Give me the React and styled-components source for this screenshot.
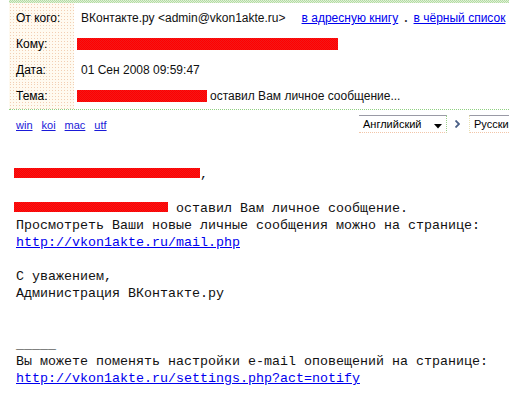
import React from "react";
import styled, { createGlobalStyle } from "styled-components";

const Global = createGlobalStyle`
  html, body { margin: 0; padding: 0; background: #fff; }
  body { width: 509px; height: 408px; overflow: hidden; }
`;

const Page = styled.div`
  width: 509px;
  height: 408px;
  overflow: hidden;
  font-family: "Liberation Sans", Arial, sans-serif;
  color: #111;
`;

const Header = styled.div`
  margin-left: 9px;
  border-bottom: 1px dotted #8fd080;
`;

const TopBand = styled.div`
  height: 3px;
  background: repeating-conic-gradient(#b3dba3 0 25%, #dff1d6 0 50%) 0 0 / 2px 2px;
`;

const Fields = styled.div`
  display: grid;
  grid-template-columns: 65px 1fr;
  grid-template-rows: 28px 26px 26px 26px;
`;

const Label = styled.div`
  display: flex;
  align-items: center;
  padding-left: 7px;
  padding-top: ${(p) => (p.$first ? "2px" : "0")};
  font-size: 12px;
  color: #000;
  background-color: #fffaf0;
  background-image: radial-gradient(circle, #f2cfb4 0.7px, transparent 0.9px);
  background-size: 3px 3px;
`;

const Value = styled.div`
  display: flex;
  align-items: center;
  padding-left: 7px;
  padding-top: ${(p) => (p.$first ? "2px" : "0")};
  font-size: 12px;
  white-space: nowrap;
`;

const HeaderRedact = styled.span`
  display: inline-block;
  width: ${(p) => p.$w}px;
  height: 12px;
  margin-left: -4px;
  margin-right: 3px;
  background: repeating-conic-gradient(#ff0000 0 25%, #f31818 0 50%) 0 0 / 2px 2px;
`;

const Actions = styled.span`
  display: flex;
  align-items: center;
  gap: 6px;
  margin-left: 16px;
`;

const Link = styled.a`
  color: #0000ee;
  text-decoration: underline;
  cursor: pointer;
`;

const Dot = styled.span`
  color: #333;
  font-weight: bold;
`;

const EncodingBar = styled.div`
  display: flex;
  align-items: center;
  justify-content: space-between;
  height: 26px;
  padding-left: 16px;
  margin-top: 1px;
`;

const Encodings = styled.div`
  display: flex;
  gap: 9px;
  font-size: 11px;
  padding-top: 2px;
`;

const EncLink = styled.a`
  color: #1a1ad8;
  text-decoration: underline;
`;

const Translate = styled.div`
  display: flex;
  align-items: center;
  margin-right: -40px;
`;

const LangBox = styled.div`
  display: flex;
  align-items: center;
  justify-content: space-between;
  width: ${(p) => p.$w}px;
  height: 16px;
  padding-left: 4px;
  font-size: 11px;
  color: #000;
  border-top: 1px solid #9a9aa6;
  border-bottom: 1px dotted #f2c6a8;
  border-right: ${(p) => (p.$right ? "1px dotted #9ad08a" : "none")};
  border-left: ${(p) => (p.$left ? "1px dotted #e8e0b0" : "none")};
  box-sizing: content-box;
`;

const Caret = styled.svg`
  margin-right: 4px;
  margin-top: 4px;
`;

const Chevron = styled.svg`
  margin: 0 9px 0 8px;
`;

const Body = styled.div`
  padding: 29px 0 0 16px;
  font-family: "Liberation Mono", "Courier New", monospace;
  font-size: 13.333px;
  line-height: 17px;
  color: #111;
  white-space: pre;
`;

const Line = styled.div`
  height: 17px;
`;

const Redact = styled.span`
  display: inline-block;
  width: ${(p) => p.$w}px;
  height: 10px;
  margin-left: -2px;
  margin-right: ${(p) => p.$mr || 0}px;
  background: repeating-conic-gradient(#ff0000 0 25%, #f31818 0 50%) 0 0 / 2px 2px;
`;

const MonoLink = styled.a`
  color: #0000ee;
  text-decoration: underline;
`;

export default function App() {
  return (
    <Page>
      <Global />
      <Header>
        <TopBand />
        <Fields>
          <Label $first>От кого:</Label>
          <Value $first>
            ВКонтакте.ру &lt;admin@vkon1akte.ru&gt;
            <Actions>
              <Link>в адресную книгу</Link>
              <Dot>.</Dot>
              <Link>в чёрный список</Link>
            </Actions>
          </Value>
          <Label>Кому:</Label>
          <Value>
            <HeaderRedact $w={261} />
          </Value>
          <Label>Дата:</Label>
          <Value>01 Сен 2008 09:59:47</Value>
          <Label>Тема:</Label>
          <Value>
            <HeaderRedact $w={130} />
            оставил Вам личное сообщение...
          </Value>
        </Fields>
      </Header>
      <EncodingBar>
        <Encodings>
          <EncLink>win</EncLink>
          <EncLink>koi</EncLink>
          <EncLink>mac</EncLink>
          <EncLink>utf</EncLink>
        </Encodings>
        <Translate>
          <LangBox $w={83} $right>
            Английский
            <Caret width="8" height="5" viewBox="0 0 8 5">
              <path d="M0 0 H8 L4 4.5 Z" fill="#000" />
            </Caret>
          </LangBox>
          <Chevron width="5" height="8" viewBox="0 0 5 8">
            <path d="M0.5 0.5 L4 4 L0.5 7.5" fill="none" stroke="#4a5f86" strokeWidth="1.8" />
          </Chevron>
          <LangBox $w={75} $left>
            Русский
          </LangBox>
        </Translate>
      </EncodingBar>
      <Body>
        <Line>
          <Redact $w={186} />,
        </Line>
        <Line />
        <Line>
          <Redact $w={154} $mr={8} />оставил Вам личное сообщение.
        </Line>
        <Line>Просмотреть Ваши новые личные сообщения можно на странице:</Line>
        <Line>
          <MonoLink>http://vkon1akte.ru/mail.php</MonoLink>
        </Line>
        <Line />
        <Line>С уважением,</Line>
        <Line>Администрация ВКонтакте.ру</Line>
        <Line />
        <Line />
        <Line>_____</Line>
        <Line>Вы можете поменять настройки e-mail оповещений на странице:</Line>
        <Line>
          <MonoLink>http://vkon1akte.ru/settings.php?act=notify</MonoLink>
        </Line>
      </Body>
    </Page>
  );
}
